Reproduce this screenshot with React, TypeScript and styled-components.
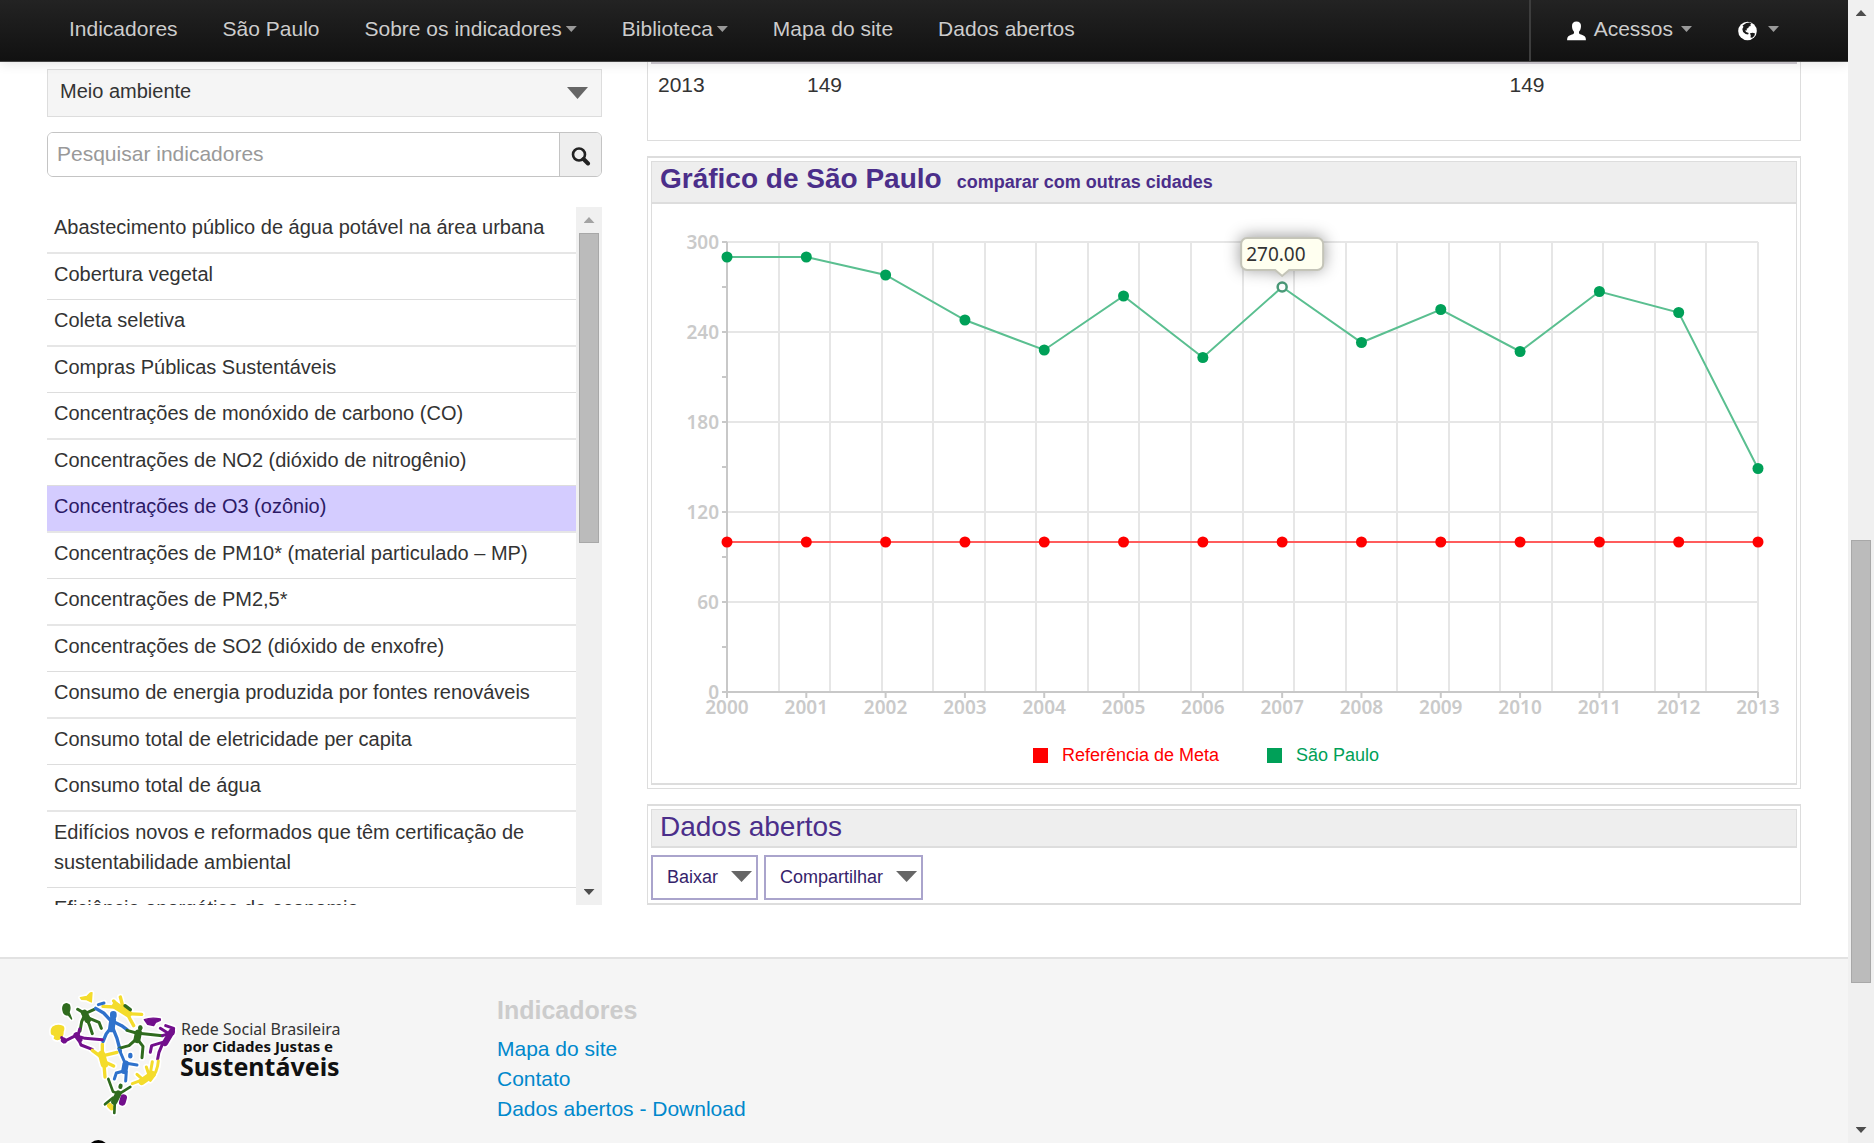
import React, { useState } from 'react';
import styled, { createGlobalStyle } from 'styled-components';

const sans = '"Liberation Sans", Arial, Helvetica, sans-serif';
const humanist = '"Noto Sans", "Open Sans", sans-serif';
const line = '#dddddd';
const purple = '#4b2e8a';

const GlobalStyle = createGlobalStyle`
  *, *::before, *::after { box-sizing: border-box; }
  body { margin: 0; background: #fff; color: #333; font-family: ${sans}; font-size: 21px; line-height: 30px; }
  h2, h3, ul { margin: 0; padding: 0; }
  ul { list-style: none; }
  a { text-decoration: none; color: inherit; }
  button, input, select { font: inherit; color: inherit; margin: 0; }
`;

/* ---------- frame ---------- */

const Frame = styled.div`
  display: grid;
  grid-template-columns: minmax(0, 1fr) 26px;
  height: 100vh;
  overflow: hidden;
`;

const Page = styled.div`
  display: flex;
  flex-direction: column;
  min-height: 0;
  overflow: hidden;
`;

const Track = styled.div`
  display: flex;
  flex-direction: column;
  background: #f0f0f0;
  min-height: 0;
`;

const TrackButton = styled.button`
  display: grid;
  place-items: center;
  flex: none;
  height: 26px;
  padding: 0;
  border: 0;
  background: none;
`;

const TrackLane = styled.div<{ $rows: string }>`
  flex: 1;
  display: grid;
  grid-template-rows: ${(p) => p.$rows};
  padding: 0 3px;
`;

const Thumb = styled.div`
  grid-row: 2;
  background: #bbbbbb;
  border: 1px solid #a8a8a8;
`;

const Triangle = styled.span<{ $w: number; $h: number; $color: string; $up?: boolean }>`
  display: inline-block;
  flex: none;
  width: ${(p) => p.$w}px;
  height: ${(p) => p.$h}px;
  background: ${(p) => p.$color};
  clip-path: ${(p) => (p.$up ? 'polygon(50% 0, 100% 100%, 0 100%)' : 'polygon(0 0, 100% 0, 50% 100%)')};
`;

function Scrollbar({ rows, topColor }: { rows: string; topColor: string }) {
  return (
    <Track>
      <TrackButton aria-label="Rolar para cima">
        <Triangle $w={11} $h={6} $color={topColor} $up />
      </TrackButton>
      <TrackLane $rows={rows}>
        <Thumb />
      </TrackLane>
      <TrackButton aria-label="Rolar para baixo">
        <Triangle $w={11} $h={6} $color="#4d4d4d" />
      </TrackButton>
    </Track>
  );
}

/* ---------- navigation ---------- */

const Navbar = styled.nav`
  position: relative;
  z-index: 1;
  flex: none;
  display: flex;
  justify-content: space-between;
  height: 62px;
  background: linear-gradient(#232323, #111111);
  border-bottom: 1px solid #444;
  box-shadow: 0 1px 12px rgba(0, 0, 0, 0.12);
  color: #cccccc;
  text-shadow: 0 -1px 0 rgba(0, 0, 0, 0.25);
`;

const NavGroup = styled.ul<{ $side: 'left' | 'right' }>`
  display: flex;
  gap: ${(p) => (p.$side === 'left' ? 45 : 46)}px;
  padding: ${(p) => (p.$side === 'left' ? '14px 0 0 69px' : '14px 69px 0 36px')};
  ${(p) => p.$side === 'right' && 'border-left: 2px solid #3d3d3d;'}
`;

const NavLink = styled.a<{ $gap?: number }>`
  display: flex;
  align-items: center;
  gap: ${(p) => p.$gap ?? 4}px;
  min-height: 30px;
  white-space: nowrap;
  & > svg { margin-top: 4px; }
`;

const Caret = () => <Triangle $w={11} $h={6} $color="#999999" />;

const UserIcon = () => (
  <svg width="19" height="20" viewBox="0 0 19 20" aria-hidden="true">
    <path
      fill="#fff"
      d="M9.5 .6C6.600 .6 5 2.300 5 5c0 1.500.3 2.600.6 3.600.3 1 1.200 1.600 1.400 2.400.2 1-.2 1.900-1.200 2.300-2 .8-4.600 1.300-5.300 3.300-.3.8-.4 1.600-.4 2.700h18.800c0-1.100-.1-1.900-.4-2.700-.7-2-3.300-2.500-5.300-3.300-1-.4-1.400-1.300-1.200-2.300.2-.8 1.100-1.400 1.400-2.400.3-1 .6-2.100.6-3.600 0-2.700-1.600-4.400-4.500-4.400z"
    />
  </svg>
);

const GlobeIcon = () => (
  <svg width="19" height="20" viewBox="0 0 19 20" aria-hidden="true">
    <circle cx="9.500" cy="10" r="9.300" fill="#fff" />
    <path fill="#1a1a1a" d="M8.300 1.900l3.500-.3 1.800 1.200-1.400.8.6 1.300-1.900.5-.6 1.600-1.700.7.4 1.500-1.900.4 1 1.500 2.600.8-.6 1.600-2.500-.4-2.500-2.200-.8-2.800 1.200-2.400-1-1.200z" />
    <path fill="#1a1a1a" d="M12 12.200l2.800-.5 2.300.9-.9 2.300-2 1.900-1.700-.4.300-1.900z" />
  </svg>
);

/* ---------- content ---------- */

const Content = styled.main`
  flex: none;
  display: grid;
  grid-template-columns: minmax(0, 555fr) minmax(0, 1154fr);
  column-gap: 45px;
  padding: 0 47px 52px;
`;

const Sidebar = styled.aside`
  padding-top: 7px;
  font-size: 20px;
`;

const SelectBox = styled.div`
  position: relative;
  display: flex;
  height: 48px;
  border: 1px solid ${line};
  background: #f5f5f5;
`;

const Select = styled.select`
  appearance: none;
  flex: 1;
  border: 0;
  padding: 0 12px 4px;
  background: transparent;
`;

const SelectArrow = styled.span`
  position: absolute;
  right: 13px;
  top: 17px;
  display: flex;
  pointer-events: none;
`;

const Search = styled.form`
  display: flex;
  height: 45px;
  margin: 15px 0 30px;
  border: 1px solid #c4c4c4;
  border-radius: 6px;
  overflow: hidden;
  font-size: 21px;
`;

const SearchInput = styled.input`
  flex: 1;
  min-width: 0;
  border: 0;
  padding: 0 9px 2px;
  background: #fff;
  &::placeholder { color: #999; opacity: 1; }
`;

const SearchButton = styled.button`
  display: grid;
  place-items: center;
  width: 42px;
  padding: 2px 0 0;
  border: 0;
  border-left: 1px solid #c4c4c4;
  background: #eeeeee;
`;

const ListBox = styled.div`
  display: grid;
  grid-template-columns: minmax(0, 1fr) 26px;
  height: 698px;
`;

const List = styled.ul`
  overflow: hidden;
`;

const ListItem = styled.li<{ $active: boolean }>`
  padding: 5px 7px 10px;
  border-bottom: 1px solid ${line};
  background: ${(p) => (p.$active ? '#d4ccff' : 'transparent')};
  color: ${(p) => (p.$active ? '#2c1a66' : '#333')};
  &:nth-child(odd) { border-bottom-width: 2px; border-bottom-color: #e6e6e6; }
`;

const Main = styled.div`
  display: flex;
  flex-direction: column;
  gap: 15px;
`;

const TableBox = styled.div`
  padding: 0 3px 40px;
  border: 1px solid ${line};
  border-top: 0;
`;

const Table = styled.table`
  width: 100%;
  border-collapse: collapse;
  table-layout: fixed;
`;

const Cell = styled.td<{ $width?: string }>`
  width: ${(p) => p.$width ?? 'auto'};
  padding: 6px 7px 0;
  border-top: 2px solid #cfcbd2;
  text-align: left;
`;

const Panel = styled.section<{ $thickBase?: boolean }>`
  padding: 3px;
  border: 1px solid ${line};
  border-top-width: 2px;
  border-bottom-width: ${(p) => (p.$thickBase ? 2 : 1)}px;
`;

const PanelInner = styled.div`
  border: solid ${line};
  border-width: 0 1px 2px;
`;

const PanelHead = styled.header<{ $base: number; $sides?: boolean }>`
  display: flex;
  align-items: baseline;
  gap: 15px;
  padding: 1px 8px ${(p) => p.$base}px;
  border: solid ${line};
  border-width: ${(p) => (p.$sides ? '1px 1px 2px' : '1px 0 2px')};
  background: #eeeeee;
  color: ${purple};
`;

const Title = styled.h2<{ $bold?: boolean }>`
  font-size: 28px;
  line-height: 32px;
  font-weight: ${(p) => (p.$bold ? 700 : 400)};
`;

const CompareLink = styled.a`
  font-size: 18px;
  font-weight: 700;
`;

const Legend = styled.ul`
  display: flex;
  justify-content: center;
  padding: 10px 0 13px;
  font-size: 18px;
`;

const LegendItem = styled.li<{ $color: string }>`
  display: flex;
  align-items: center;
  gap: 14px;
  margin: 0 42px 0 6px;
  color: ${(p) => p.$color};
  &::before {
    content: '';
    width: 15px;
    height: 15px;
    background: ${(p) => p.$color};
  }
`;

const Actions = styled.div`
  display: flex;
  gap: 6px;
  padding-top: 7px;
`;

const ActionButton = styled.button`
  display: flex;
  align-items: center;
  gap: 13px;
  height: 45px;
  padding: 0 4px 2px 14px;
  border: 2px solid #aaa4cc;
  background: #fff;
  color: #35236b;
  font-size: 18px;
`;

/* ---------- chart ---------- */

const ChartSvg = styled.svg`
  display: block;
  width: 100%;
  height: auto;
  font-family: ${humanist};
  font-size: 19px;
`;

const TipGroup = styled.g`
  filter: drop-shadow(0 -1px 8px rgba(0, 0, 0, 0.4));
`;

const saoPaulo = [290, 290, 278, 248, 228, 264, 223, 270, 233, 255, 227, 267, 253, 149];
const reference = saoPaulo.map(() => 100);

const plot = { left: 75, right: 1106, top: 38, bottom: 488, max: 300 };
const px = (i: number) => plot.left + (i * (plot.right - plot.left)) / (saoPaulo.length - 1);
const py = (v: number) => plot.bottom - (v * (plot.bottom - plot.top)) / plot.max;
const points = (values: number[]) => values.map((v, i) => `${px(i)},${py(v)}`).join(' ');

function Chart() {
  const hovered = 7;
  const tipX = px(hovered);
  const columns = Array.from({ length: 20 }, (_, i) => Math.round(plot.left + ((i + 1) * (plot.right - plot.left)) / 20));
  return (
    <ChartSvg viewBox="0 0 1144 526" role="img" aria-label="Gráfico de São Paulo">
      <g stroke="#e6e6e6" strokeWidth="2">
        {columns.map((x) => (
          <line key={x} x1={x} x2={x} y1={plot.top} y2={plot.bottom} />
        ))}
        {[60, 120, 180, 240, 300].map((v) => (
          <line key={v} x1={plot.left} x2={plot.right} y1={py(v)} y2={py(v)} />
        ))}
      </g>
      <g stroke="#c8c8c8" strokeWidth="2">
        <line x1={plot.left} x2={plot.left} y1={plot.top} y2={plot.bottom} />
        <line x1={plot.left} x2={plot.right} y1={plot.bottom} y2={plot.bottom} />
        {Array.from({ length: 11 }, (_, i) => (
          <line key={i} x1={plot.left - 5} x2={plot.left} y1={py(i * 30)} y2={py(i * 30)} />
        ))}
        {saoPaulo.map((_, i) => (
          <line key={i} x1={px(i)} x2={px(i)} y1={plot.bottom} y2={plot.bottom + 6} />
        ))}
      </g>
      <g fill="#cacaca" fontWeight="600">
        {[0, 60, 120, 180, 240, 300].map((v) => (
          <text key={v} x={plot.left - 8} y={py(v) + 7} textAnchor="end">
            {v}
          </text>
        ))}
        {saoPaulo.map((_, i) => (
          <text key={i} x={px(i)} y={plot.bottom + 22} textAnchor="middle">
            {2000 + i}
          </text>
        ))}
      </g>
      <polyline points={points(reference)} fill="none" stroke="#ff5c5c" strokeWidth="2" />
      <polyline points={points(saoPaulo)} fill="none" stroke="#5abf90" strokeWidth="2" />
      {reference.map((v, i) => (
        <circle key={i} cx={px(i)} cy={py(v)} r="5.500" fill="#ff0000" />
      ))}
      {saoPaulo.map((v, i) =>
        i === hovered ? (
          <circle key={i} cx={px(i)} cy={py(v)} r="4.500" fill="#fff" stroke="#4a9a78" strokeWidth="2.500" />
        ) : (
          <circle key={i} cx={px(i)} cy={py(v)} r="5.500" fill="#00a058" />
        )
      )}
      <TipGroup>
        <path
          d={`M${tipX - 35} 34h70a6 6 0 0 1 6 6v20a6 6 0 0 1 -6 6h-28l-7 6l-7 -6h-28a6 6 0 0 1 -6 -6v-20a6 6 0 0 1 6 -6z`}
          fill="#fffff0"
          stroke="#c4c4b8"
          strokeWidth="2"
        />
      </TipGroup>
      <text x={tipX - 36} y="57" fill="#333">
        270.00
      </text>
    </ChartSvg>
  );
}

/* ---------- footer ---------- */

const Footer = styled.footer`
  flex: 1;
  min-height: 0;
  overflow: hidden;
  display: grid;
  grid-template-columns: 450px 1fr;
  padding: 26px 47px 0;
  border-top: 2px solid #e2e2e2;
  background: #f5f5f5;
`;

const FooterNav = styled.nav`
  display: flex;
  flex-direction: column;
  align-items: flex-start;
  padding-top: 10px;
  color: #0088cc;
`;

const FooterTitle = styled.h3`
  margin-bottom: 9px;
  color: #cccccc;
  font-size: 25px;
  line-height: 30px;
`;

const Y = '#f4dc2c';
const G = '#2f6b1e';
const B = '#2f72cc';
const P = '#720f8c';

type Mark = { d: string; c: string; w: number; fill?: boolean };

/* The people that together form the outline of Brazil. */
const marks: Mark[] = [
  { d: 'M106 38L126 34L136 24L141 23L139 51L125 44L110 43Z', c: Y, w: 4, fill: true },
  { d: 'M56 60Q64 52 73 60Q77 70 72 82L80 102L70 90Q56 90 54 76Q52 66 56 60Z', c: G, w: 4, fill: true },
  { d: 'M23 127Q36 117 53 124Q59 128 54 140Q55 154 44 162Q34 166 28 160L30 152L20 147Q17 134 23 127Z', c: Y, w: 4, fill: true },
  { d: 'M174 64L208 66L244 86L290 88M226 36L234 66M206 48L220 62M246 84L256 104L266 122', c: Y, w: 10 },
  { d: 'M212 62L250 86', c: Y, w: 22 },
  { d: 'M240 62L256 74', c: G, w: 10 },
  { d: 'M160 59L177 54', c: B, w: 9 },
  { d: 'M98 73L120 86L148 73M120 88L110 110L105 138M122 92L134 122L142 146M128 98L162 112L169 130', c: G, w: 9 },
  { d: 'M118 84L128 104', c: G, w: 20 },
  { d: 'M152 70L176 84L200 110M206 110L230 122L246 134M198 128L184 146L174 170M204 130L216 160L226 198', c: B, w: 10 },
  { d: 'M205 88L205 92M203 104L199 132', c: B, w: 20 },
  { d: 'M50 158L56 170L92 152L120 160L172 164M104 132L98 156L108 180L142 193', c: P, w: 9 },
  { d: 'M56 166L58 167M94 150L104 164', c: P, w: 17 },
  { d: 'M246 136L274 144L352 152M272 164L252 182L222 190M280 166L294 184L291 218M286 126L284 142', c: G, w: 9 },
  { d: 'M280 144L276 164', c: G, w: 21 },
  { d: 'M286 127L286 130', c: G, w: 13 },
  { d: 'M298 104Q320 96 346 102L346 106L332 112L326 122L308 118Z', c: P, w: 4, fill: true },
  { d: 'M352 152L372 146L346 130M362 122L386 130L384 146M360 170L320 182L316 202M352 178L342 202L338 222', c: P, w: 9 },
  { d: 'M380 140L360 174', c: P, w: 19 },
  { d: 'M142 196L166 214L216 202M172 178L172 212M178 230L206 243M176 226L180 276', c: Y, w: 10 },
  { d: 'M170 208L178 238', c: Y, w: 22 },
  { d: 'M222 192L240 234L276 240M236 258L214 264L208 282M244 260L242 288', c: B, w: 9 },
  { d: 'M242 236L238 258', c: B, w: 19 },
  { d: 'M256 210L256 214', c: B, w: 13 },
  { d: 'M340 228Q338 260 316 286M276 268L294 284L262 296M322 230L316 264M304 246L312 270', c: Y, w: 9 },
  { d: 'M290 290L322 268', c: Y, w: 20 },
  { d: 'M236 338L232 352', c: P, w: 20 },
  { d: 'M194 362L200 368', c: Y, w: 16 },
  { d: 'M190 282L204 320L224 326L256 306M204 338L180 358M210 340L208 384', c: G, w: 8 },
  { d: 'M220 326L208 350', c: G, w: 19 },
  { d: 'M227 302L226 306', c: G, w: 12 },
];

function Logo() {
  return (
    <svg width="300" height="170" viewBox="2 0 300 170" role="img" aria-label="Rede Social Brasileira por Cidades Justas e Sustentáveis">
      <g transform="scale(0.3333)" strokeLinecap="round" strokeLinejoin="round">
        {marks.map((m) => (
          <path key={m.d} d={m.d} stroke="#fff" strokeWidth={m.w + 10} fill="none" />
        ))}
        {marks.map((m) => (
          <path key={m.d} d={m.d} stroke={m.c} strokeWidth={m.w} fill={m.fill ? m.c : 'none'} />
        ))}
        <ellipse cx="160" cy="494" rx="30" ry="29" fill="#000" />
      </g>
      <g fontFamily={humanist} fill="#111">
        <text x="136" y="50" fontSize="16" fill="#333">Rede Social Brasileira</text>
        <text x="138" y="67" fontSize="15" fontWeight="700">por Cidades Justas e</text>
        <text x="135" y="91" fontSize="25" fontWeight="700">Sustentáveis</text>
      </g>
    </svg>
  );
}

/* ---------- page ---------- */

const navItems = [
  { label: 'Indicadores' },
  { label: 'São Paulo' },
  { label: 'Sobre os indicadores', menu: true },
  { label: 'Biblioteca', menu: true },
  { label: 'Mapa do site' },
  { label: 'Dados abertos' },
];

const indicators = [
  'Abastecimento público de água potável na área urbana',
  'Cobertura vegetal',
  'Coleta seletiva',
  'Compras Públicas Sustentáveis',
  'Concentrações de monóxido de carbono (CO)',
  'Concentrações de NO2 (dióxido de nitrogênio)',
  'Concentrações de O3 (ozônio)',
  'Concentrações de PM10* (material particulado – MP)',
  'Concentrações de PM2,5*',
  'Concentrações de SO2 (dióxido de enxofre)',
  'Consumo de energia produzida por fontes renováveis',
  'Consumo total de eletricidade per capita',
  'Consumo total de água',
  'Edifícios novos e reformados que têm certificação de sustentabilidade ambiental',
  'Eficiência energética da economia',
];

export default function App() {
  const [active, setActive] = useState('Concentrações de O3 (ozônio)');
  return (
    <>
      <GlobalStyle />
      <Frame>
        <Page>
          <Navbar>
            <NavGroup $side="left">
              {navItems.map((item) => (
                <li key={item.label}>
                  <NavLink href="#">
                    {item.label}
                    {item.menu && <Caret />}
                  </NavLink>
                </li>
              ))}
            </NavGroup>
            <NavGroup $side="right">
              <li>
                <NavLink href="#" $gap={8}>
                  <UserIcon />
                  Acessos
                  <Caret />
                </NavLink>
              </li>
              <li>
                <NavLink href="#" $gap={11} aria-label="Idioma">
                  <GlobeIcon />
                  <Caret />
                </NavLink>
              </li>
            </NavGroup>
          </Navbar>

          <Content>
            <Sidebar>
              <SelectBox>
                <Select aria-label="Eixo" defaultValue="Meio ambiente">
                  <option>Meio ambiente</option>
                </Select>
                <SelectArrow>
                  <Triangle $w={21} $h={12} $color="#666666" />
                </SelectArrow>
              </SelectBox>
              <Search onSubmit={(e) => e.preventDefault()}>
                <SearchInput type="text" aria-label="Pesquisar indicadores" placeholder="Pesquisar indicadores" />
                <SearchButton aria-label="Pesquisar">
                  <svg width="20" height="20" viewBox="0 0 20 20" fill="none" stroke="#222" aria-hidden="true">
                    <circle cx="8" cy="8.500" r="6" strokeWidth="2.600" />
                    <path d="M12.500 13l4.500 4.500" strokeWidth="4" strokeLinecap="round" />
                  </svg>
                </SearchButton>
              </Search>
              <ListBox>
                <List>
                  {indicators.map((name) => (
                    <ListItem key={name} $active={name === active}>
                      <a href="#" onClick={() => setActive(name)}>
                        {name}
                      </a>
                    </ListItem>
                  ))}
                </List>
                <Scrollbar rows="0fr 310fr 336fr" topColor="#a3a3a3" />
              </ListBox>
            </Sidebar>

            <Main>
              <TableBox>
                <Table>
                  <tbody>
                    <tr>
                      <Cell $width="13%">2013</Cell>
                      <Cell $width="61.3%">149</Cell>
                      <Cell>149</Cell>
                    </tr>
                  </tbody>
                </Table>
              </TableBox>

              <Panel>
                <PanelInner>
                  <PanelHead $base={5}>
                    <Title $bold>Gráfico de São Paulo</Title>
                    <CompareLink href="#">comparar com outras cidades</CompareLink>
                  </PanelHead>
                  <Chart />
                  <Legend>
                    <LegendItem $color="#ff0000">Referência de Meta</LegendItem>
                    <LegendItem $color="#00a058">São Paulo</LegendItem>
                  </Legend>
                </PanelInner>
              </Panel>

              <Panel $thickBase>
                <PanelHead $base={3} $sides>
                  <Title>Dados abertos</Title>
                </PanelHead>
                <Actions>
                  <ActionButton>
                    Baixar
                    <Triangle $w={21} $h={11} $color="#666666" />
                  </ActionButton>
                  <ActionButton>
                    Compartilhar
                    <Triangle $w={21} $h={11} $color="#666666" />
                  </ActionButton>
                </Actions>
              </Panel>
            </Main>
          </Content>

          <Footer>
            <Logo />
            <FooterNav>
              <FooterTitle>Indicadores</FooterTitle>
              <a href="#">Mapa do site</a>
              <a href="#">Contato</a>
              <a href="#">Dados abertos - Download</a>
            </FooterNav>
          </Footer>
        </Page>
        <Scrollbar rows="514fr 443fr 134fr" topColor="#4d4d4d" />
      </Frame>
    </>
  );
}
